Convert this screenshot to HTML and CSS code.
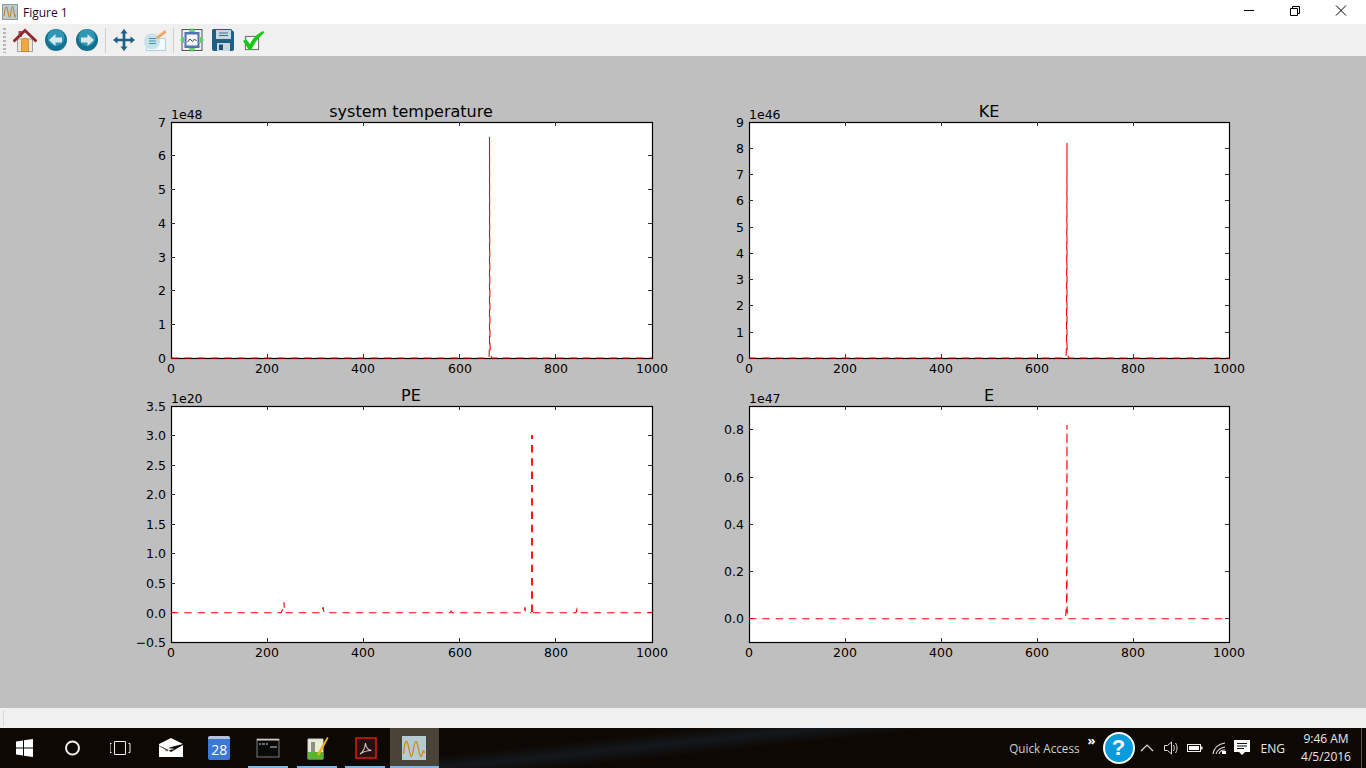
FILE: index.html
```html
<!DOCTYPE html>
<html lang="en">
<head>
<meta charset="utf-8">
<title>Figure 1</title>
<link rel="stylesheet" href="styles.css">
</head>
<body>
<div class="window">
  <header class="titlebar">
    <svg class="app-icon" viewBox="0 0 16 16"><rect x=".5" y=".5" width="15" height="15" fill="#b9cdd2" stroke="#8d9a9e"/><path d="M2 12C3 1 5 1 6 8s2 7 3 0 2-7 3 0 1 5 2 3" fill="none" stroke="#c9821e" stroke-width="1.1"/></svg>
    <span class="title-text">Figure 1</span>
    <div class="controls">
      <svg class="ctl" viewBox="0 0 46 24"><path d="M18 10.500h10" stroke="#000" fill="none"/></svg>
      <svg class="ctl" viewBox="0 0 46 24"><path d="M18.500 8.500h7v7h-7zM20.500 8.500v-2h7v7h-2" stroke="#000" fill="none"/></svg>
      <svg class="ctl" viewBox="0 0 46 24"><path d="M18 5.500l10 10M28 5.500l-10 10" stroke="#000" fill="none"/></svg>
    </div>
  </header>

  <nav class="toolbar">
    <span class="grip"></span>
    <svg class="tool" viewBox="0 0 24 24"><path d="M5.500 3h3.500v6H5.500z" fill="#b5484a"/><path d="M4.500 11h15v12.500h-15z" fill="#efe6d6" stroke="#8b8b8b" stroke-width=".8"/><path d="M8.500 13.500a3.500 3.500 0 0 1 7 0V23.500h-7z" fill="#f2a93b" stroke="#a9762a" stroke-width=".6"/><path d="M.5 13.500L12 2.500l11.500 11" fill="none" stroke="#8f2c33" stroke-width="3"/></svg>
    <svg class="tool" viewBox="0 0 24 24"><circle cx="12" cy="12" r="11" fill="#14708f"/><circle cx="12" cy="9.500" r="8.500" fill="#3ba6c2" opacity=".7"/><path d="M5 12l6.500-6v3.500H18v5h-6.500V18z" fill="#d8eaf0"/></svg>
    <svg class="tool" viewBox="0 0 24 24"><circle cx="12" cy="12" r="11" fill="#14708f"/><circle cx="12" cy="9.500" r="8.500" fill="#3ba6c2" opacity=".7"/><path d="M19 12l-6.500-6v3.500H6v5h6.500V18z" fill="#d8eaf0"/></svg>
    <span class="sep"></span>
    <svg class="tool" viewBox="0 0 24 24"><path d="M12 1l3.500 4.500H13.300v5.200h5.200V8.500L23 12l-4.500 3.500v-2.200h-5.200v5.200h2.200L12 23l-3.500-4.500h2.200v-5.200H5.500v2.200L1 12l4.500-3.500v2.200h5.200V5.500H8.500z" fill="#1c5f82"/></svg>
    <svg class="tool" viewBox="0 0 24 24"><rect x="3.500" y="10.500" width="19" height="12" fill="#f2fafc" stroke="#a6d6e2"/><circle cx="9" cy="13.500" r="8" fill="#c8e2ea"/><path d="M6 10.500h7M6 13h7M6 15.500h7" stroke="#3f93ae" stroke-width="1.200"/><path d="M13 9l9-7 1.500 2.500-9 7z" fill="#f0a860"/></svg>
    <span class="sep"></span>
    <svg class="tool" viewBox="0 0 24 24"><rect x="2" y="1.500" width="20" height="21" fill="#eee" stroke="#555"/><rect x="4.500" y="4" width="15" height="16" fill="#4f73b5"/><rect x="6.500" y="6.500" width="11" height="11" fill="#f4f4f4"/><path d="M7.500 14l2.500-3 2.500 2.500 2-2.500 2 2" fill="none" stroke="#333" stroke-width=".9"/><path d="M12 0l3.500 4h-7zM12 24l-3.500-4h7zM0 12l4-3.500v7zM24 12l-4 3.500v-7z" fill="#5ed35e"/></svg>
    <svg class="tool" viewBox="0 0 24 24"><path d="M2 1h18l3 3v17a2 2 0 0 1-2 2H3a2 2 0 0 1-2-2V2z" fill="#1f5f86"/><rect x="5" y="2" width="15" height="9" fill="#c9d6dc"/><path d="M8 5h9M8 7.500h9" stroke="#3d6f8d"/><rect x="6" y="15" width="13" height="8" fill="#c9d6dc"/><rect x="8" y="16.500" width="4" height="5.500" fill="#1f4f70"/></svg>
    <svg class="tool" viewBox="0 0 24 24"><rect x="3.500" y="8.500" width="13" height="13" fill="#fff" stroke="#777" stroke-width="1.200"/><path d="M1 13l3-2 4 5c3-6 7-10 13-13l1.500 1.500C16 10 12 16 9 22H7z" fill="#16c916"/></svg>
  </nav>

  <main class="canvas">
    <svg class="figure" viewBox="0 56 1366 652">
      <g class="frames">
        <rect x="171.500" y="122.500" width="481" height="236"/>
        <rect x="749.500" y="122.500" width="480" height="236"/>
        <rect x="171.500" y="406.500" width="481" height="236"/>
        <rect x="749.500" y="406.500" width="480" height="236"/>
      </g>
      <g class="ticks">
        <path d="M267.500 122v4M363.500 122v4M459.500 122v4M555.500 122v4M267.500 358v-4M363.500 358v-4M459.500 358v-4M555.500 358v-4M171 324.500h4M171 290.500h4M171 257.500h4M171 223.500h4M171 189.500h4M171 155.500h4M652 324.500h-4M652 290.500h-4M652 257.500h-4M652 223.500h-4M652 189.500h-4M652 155.500h-4"/>
        <path d="M845.500 122v4M941.500 122v4M1037.500 122v4M1133.500 122v4M845.500 358v-4M941.500 358v-4M1037.500 358v-4M1133.500 358v-4M749 332.500h4M749 305.500h4M749 279.500h4M749 253.500h4M749 227.500h4M749 200.500h4M749 174.500h4M749 148.500h4M1229 332.500h-4M1229 305.500h-4M1229 279.500h-4M1229 253.500h-4M1229 227.500h-4M1229 200.500h-4M1229 174.500h-4M1229 148.500h-4"/>
        <path d="M267.500 406v4M363.500 406v4M459.500 406v4M555.500 406v4M267.500 642v-4M363.500 642v-4M459.500 642v-4M555.500 642v-4M171 612.500h4M171 583.500h4M171 553.500h4M171 524.500h4M171 494.500h4M171 465.500h4M171 435.500h4M652 612.500h-4M652 583.500h-4M652 553.500h-4M652 524.500h-4M652 494.500h-4M652 465.500h-4M652 435.500h-4"/>
        <path d="M845.500 406v4M941.500 406v4M1037.500 406v4M1133.500 406v4M845.500 642v-4M941.500 642v-4M1037.500 642v-4M1133.500 642v-4M749 618.500h4M749 571.500h4M749 524.500h4M749 477.500h4M749 429.500h4M1229 618.500h-4M1229 571.500h-4M1229 524.500h-4M1229 477.500h-4M1229 429.500h-4"/>
      </g>
      <g class="curves">
        <path d="M171 358H489L489.500 345V137L490 345L490.500 355L492 358H652"/>
        <path d="M749 358H1066L1066.500 345L1067 143V345L1067.500 355L1069 358H1229"/>
        <path d="M171 612.700H281L283 609L284 602L284.500 612.700H322L323 607L324 612.700H450L451 611L452 612.700H524L525 607L525.500 612.700H531.500M533 612.700H576L577 609L578 612.700H652"/>
        <path class="spike" d="M532 612V435"/>
        <path d="M749 618.700H1065.500L1066.500 605L1067 425V605L1067.500 618.700H1229"/>
      </g>
      <g class="labels">
        <text class="title" x="411" y="117">system temperature</text>
        <text class="title" x="989" y="117">KE</text>
        <text class="title" x="411" y="401">PE</text>
        <text class="title" x="989" y="401">E</text>
        <text class="offset" x="171" y="119">1e48</text>
        <text class="offset" x="749" y="119">1e46</text>
        <text class="offset" x="171" y="403">1e20</text>
        <text class="offset" x="749" y="403">1e47</text>
        <g class="xt">
          <text x="171" y="373">0</text><text x="267" y="373">200</text><text x="363" y="373">400</text><text x="460" y="373">600</text><text x="556" y="373">800</text><text x="652" y="373">1000</text>
          <text x="749" y="373">0</text><text x="845" y="373">200</text><text x="941" y="373">400</text><text x="1037" y="373">600</text><text x="1133" y="373">800</text><text x="1229" y="373">1000</text>
          <text x="171" y="657">0</text><text x="267" y="657">200</text><text x="363" y="657">400</text><text x="460" y="657">600</text><text x="556" y="657">800</text><text x="652" y="657">1000</text>
          <text x="749" y="657">0</text><text x="845" y="657">200</text><text x="941" y="657">400</text><text x="1037" y="657">600</text><text x="1133" y="657">800</text><text x="1229" y="657">1000</text>
        </g>
        <g class="yt">
          <text x="166" y="363">0</text><text x="166" y="329">1</text><text x="166" y="295">2</text><text x="166" y="262">3</text><text x="166" y="228">4</text><text x="166" y="194">5</text><text x="166" y="160">6</text><text x="166" y="127">7</text>
          <text x="744" y="363">0</text><text x="744" y="337">1</text><text x="744" y="310">2</text><text x="744" y="284">3</text><text x="744" y="258">4</text><text x="744" y="232">5</text><text x="744" y="205">6</text><text x="744" y="179">7</text><text x="744" y="153">8</text><text x="744" y="127">9</text>
          <text x="166" y="647">−0.5</text><text x="166" y="618">0.0</text><text x="166" y="588">0.5</text><text x="166" y="558">1.0</text><text x="166" y="529">1.5</text><text x="166" y="499">2.0</text><text x="166" y="470">2.5</text><text x="166" y="440">3.0</text><text x="166" y="411">3.5</text>
          <text x="744" y="623">0.0</text><text x="744" y="576">0.2</text><text x="744" y="529">0.4</text><text x="744" y="482">0.6</text><text x="744" y="434">0.8</text>
        </g>
      </g>
    </svg>
  </main>

  <div class="statusbar"><span class="status-grip"></span></div>
</div>

<footer class="taskbar">
  <div class="apps">
    <div class="app"><svg class="ti" viewBox="0 0 24 24"><path d="M4 5.500l7-1v7H4zM12 4.300l9-1.300v8.500h-9zM4 12.500h7v7l-7-1zM12 12.500h9V21l-9-1.300z" fill="#fff"/></svg></div>
    <div class="app"><svg class="ti" viewBox="0 0 24 24"><circle cx="11.500" cy="12" r="6.500" fill="none" stroke="#eee" stroke-width="2"/></svg></div>
    <div class="app"><svg class="ti" viewBox="0 0 24 24"><path d="M4.500 6.500h11v13h-11zM1.500 8.500H0v9h1.500M18.500 8.500H20v9h-1.500" fill="none" stroke="#eee" transform="translate(0 -1)"/></svg></div>
    <div class="app"><svg class="ti" viewBox="0 0 24 24"><path d="M0 8L12 2l12 6-8 2-7 2 7 1L5 15l7 .2L0 9.500zM0 10l9 5 3 1 12-7v12H0z" fill="#fff"/></svg></div>
    <div class="app"><div class="cal"><span class="cal-num">28</span></div></div>
    <div class="app run"><svg class="ti" viewBox="0 0 24 24"><rect x="1" y="3" width="22" height="18" fill="#0a0a0a" stroke="#999" stroke-width=".8"/><rect x="1" y="3" width="22" height="1.500" fill="#cdcdcd"/><path d="M3 8h2M6 8h3M10 8h2M14 11h7" stroke="#ccc"/></svg></div>
    <div class="app run"><svg class="ti" viewBox="0 0 24 24"><path d="M3 3h15v20H3z" fill="#e8eed2" stroke="#cfcfcf"/><path d="M3 16h15v7H3z" fill="#58b62d"/><path d="M7 6v10M9 6v10" stroke="#333"/><path d="M12 18L22 1l1.500 1L14 20z" fill="#f0b020"/></svg></div>
    <div class="app run"><svg class="ti" viewBox="0 0 24 24"><rect x="2" y="2" width="20" height="20" fill="#25120e" stroke="#e01a10" stroke-width="1.500"/><path d="M6 18c3-2 5-6 5.500-11 .5 5 2 7 6 7.500-4 0-8 1-11.500 3.500z" fill="none" stroke="#cfc4c0" stroke-width="1.100"/></svg></div>
    <div class="app active"><svg class="ti" viewBox="0 0 24 24"><rect width="24" height="24" fill="#b5cbd2"/><path d="M1.500 18C3 2 5 2 7 13s3 9 4.500 0 3-11 5 0 3 8 4 4 1.500-2 2 0" fill="none" stroke="#d5860f" stroke-width="1.300"/></svg></div>
  </div>
  <div class="tray">
    <span class="quick">Quick Access</span>
    <span class="chev">»</span>
    <span class="help">?</span>
    <svg class="tr tr-up" viewBox="0 0 16 16"><path d="M2 11l6-6 6 6" fill="none" stroke="#ddd" stroke-width="1.200"/></svg>
    <svg class="tr tr-sound" viewBox="0 0 16 16"><path d="M1.500 5.500h3l4-3.500v12l-4-3.500h-3zM10.500 5c1 2 1 4 0 6M12.500 3c2 3 2 7 0 10" fill="none" stroke="#ddd"/></svg>
    <svg class="tr tr-batt" viewBox="0 0 16 16"><rect x=".5" y="4.500" width="13" height="7" fill="none" stroke="#eee"/><rect x="2" y="6" width="10" height="4" fill="#fff"/><rect x="14" y="6.500" width="1.500" height="3" fill="#eee"/></svg>
    <svg class="tr tr-wifi" viewBox="0 0 16 16"><path d="M1 14C2 8 6 4 13 3M4 14c1-4 4-6 9-7M7 14c.5-2 2-4 6-4" fill="none" stroke="#ddd" stroke-width="1.100"/><rect x="10" y="11" width="4" height="3" fill="#fff"/></svg>
    <svg class="tr tr-note" viewBox="0 0 16 16"><path d="M0 0h16v12h-5l-3 3-3-3H0z" fill="#fff"/><path d="M3 3.500h10M3 6h10M3 8.500h7" stroke="#111"/></svg>
    <span class="lang">ENG</span>
    <div class="clock"><span>9:46 AM</span><span>4/5/2016</span></div>
    <span class="show-desktop"></span>
  </div>
</footer>
</body>
</html>
```
FILE: styles.css
```css
* { box-sizing: border-box; }
html, body { margin: 0; padding: 0; width: 1366px; height: 768px; overflow: hidden; background: #0d0804; }
body { display: flex; flex-direction: column; font-family: "Open Sans", "Noto Sans", sans-serif; }
.window { height: 728px; display: flex; flex-direction: column; }

.titlebar { height: 24px; background: #fff; display: flex; align-items: center; padding-left: 2px; }
.app-icon { width: 16px; height: 16px; margin-top: -1px; }
.title-text { margin-left: 5px; font-size: 12px; color: #1a0a2a; font-family: "Open Sans", sans-serif; }
.controls { margin-left: auto; display: flex; padding-right: 2px; }
.ctl { width: 46px; height: 24px; display: block; }

.toolbar { height: 32px; background: #f0f0f0; display: flex; align-items: center; padding-left: 3px; gap: 7px; }
.grip { width: 3px; height: 25px; background: repeating-linear-gradient(to bottom, #b5b5b5 0 2px, transparent 2px 4px); }
.tool { width: 24px; height: 24px; display: block; }
.sep { width: 1px; height: 25px; background: #cfcfcf; margin: 0 -1px 0 -1px; }

.canvas { height: 652px; background: #bfbfbf; }
.figure { display: block; width: 1366px; height: 652px; }
.frames rect { fill: #fff; stroke: #000; stroke-width: 1.2; }
.ticks path { fill: none; stroke: #333; stroke-width: 1; }
.curves path { fill: none; stroke: #f00; stroke-width: 1.1; stroke-dasharray: 7.4 5.9; }
.curves .spike { stroke-width: 1.8; }
.labels text { font-family: "DejaVu Sans", sans-serif; fill: #000; }
.title { font-size: 16px; text-anchor: middle; }
.offset { font-size: 12.5px; }
.xt text { font-size: 12.5px; text-anchor: middle; }
.yt text { font-size: 12.5px; text-anchor: end; }

.statusbar { height: 20px; background: #f0f0f0; padding: 2px 0 0 3px; }
.status-grip { display: block; width: 1px; height: 16px; background: #d9d9d9; }

.taskbar { height: 40px; display: flex; justify-content: space-between; color: #eee; background: linear-gradient(174deg, #0d0804 0 40%, #14181c 47%, #0d0804 54%); }
.apps { display: grid; grid-template-columns: repeat(9, 48.75px); }
.app { position: relative; display: flex; align-items: center; justify-content: center; }
.app.run::after { content: ""; position: absolute; left: 4px; width: 40px; bottom: 0; height: 2px; background: #76b9ed; }
.app.active { background: #4a4338; }
.app.active::after { content: ""; position: absolute; left: 0; right: 0; bottom: 0; height: 2px; background: #76b9ed; }
.ti { width: 24px; height: 24px; display: block; }
.cal { width: 22px; height: 24px; background: #3b78d8; border-top: 3px solid #b7c4d8; border-radius: 2px; display: flex; align-items: center; justify-content: center; }
.cal-num { color: #fff; font-size: 14px; line-height: 1; font-family: "Open Sans", sans-serif; }

.tray { display: flex; align-items: center; padding-right: 4px; }
.quick { font-size: 11.7px; color: #cfcfcf; }
.chev { font-size: 13px; color: #fff; font-weight: 700; margin: -16px 0 0 8px; line-height: 1; width: 15px; }
.help { width: 32px; height: 32px; border-radius: 50%; background: #0a9bdc; border: 2.500px solid #fff; color: #fff; font: 700 22px/27px "Liberation Sans", sans-serif; text-align: center; }
.tr { width: 16px; height: 16px; display: block; }
.tr-up { margin-left: 4px; }
.tr-sound { margin-left: 8px; }
.tr-batt { margin-left: 8px; }
.tr-wifi { margin-left: 9px; }
.tr-note { margin-left: 6px; }
.lang { font-size: 12px; color: #e8e8e8; margin-left: 11px; }
.clock { display: flex; flex-direction: column; align-items: center; margin-left: 18px; font-size: 12px; line-height: 18px; color: #e8e8e8; width: 46px; }
.show-desktop { width: 1px; height: 40px; background: #555; margin-left: 12px; }
```
